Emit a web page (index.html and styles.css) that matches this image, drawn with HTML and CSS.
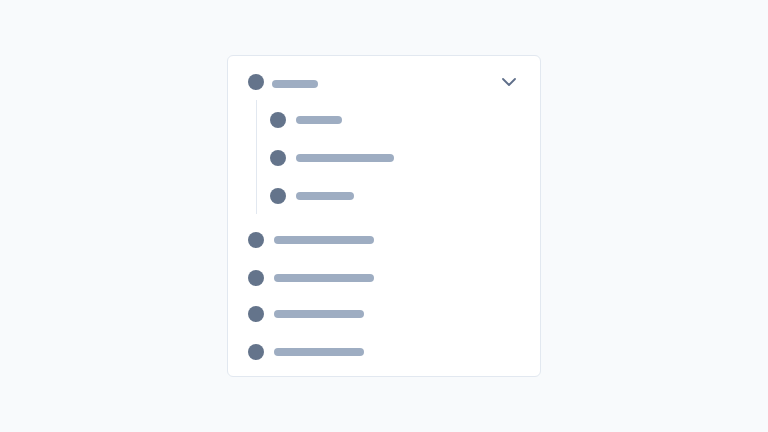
FILE: index.html
```html
<!DOCTYPE html>
<html>
<head>
<meta charset="utf-8">
<link rel="stylesheet" href="styles.css">
</head>
<body>
<div class="card">
  <div class="head">
    <span class="dot"></span>
    <span class="bar bar-head"></span>
    <svg class="chev" width="14" height="8" viewBox="0 0 14 8"><path d="M1 1L7 7L13 1" fill="none" stroke="#5f6f8a" stroke-width="1.8" stroke-linecap="round" stroke-linejoin="round"/></svg>
  </div>
  <div class="children">
    <div class="row"><span class="dot"></span><span class="bar w46"></span></div>
    <div class="row"><span class="dot"></span><span class="bar w98"></span></div>
    <div class="row"><span class="dot"></span><span class="bar w58"></span></div>
  </div>
  <div class="list">
    <div class="row"><span class="dot"></span><span class="bar w100"></span></div>
    <div class="row"><span class="dot"></span><span class="bar w100"></span></div>
    <div class="row r3"><span class="dot"></span><span class="bar w90"></span></div>
    <div class="row"><span class="dot"></span><span class="bar w90"></span></div>
  </div>
</div>
</body>
</html>
```
FILE: styles.css
```css
html, body { margin: 0; padding: 0; }
body {
  width: 768px; height: 432px;
  background: #f8fafc;
  display: flex; align-items: center; justify-content: center;
  font-family: "Inter", sans-serif;
}
.card {
  box-sizing: border-box;
  width: 314px; height: 322px;
  background: #ffffff;
  border: 1px solid #e2e8f0;
  border-radius: 6px;
  padding: 18px 20px 16px 20px;
  display: flex; flex-direction: column;
}
.head { display: flex; align-items: center; height: 16px; }
.dot { width: 16px; height: 16px; border-radius: 50%; background: #64748b; flex: none; }
.bar { height: 8px; border-radius: 4px; background: #9eadc2; flex: none; }
.bar-head { width: 46px; margin-left: 8px; margin-top: 4px; }
.chev { margin-left: auto; margin-right: 4px; }
.children {
  margin: 10px 0 0 8px;
  border-left: 1px solid #e2e8f0;
  padding: 12px 0 10px 13px;
  display: flex; flex-direction: column; gap: 22px;
}
.row { display: flex; align-items: center; height: 16px; gap: 10px; }
.list { margin-top: 18px; display: flex; flex-direction: column; gap: 22px; }
.list .r3 { margin-top: -2px; }
.w46 { width: 46px; } .w98 { width: 98px; } .w58 { width: 58px; }
.w100 { width: 100px; } .w90 { width: 90px; }
```
